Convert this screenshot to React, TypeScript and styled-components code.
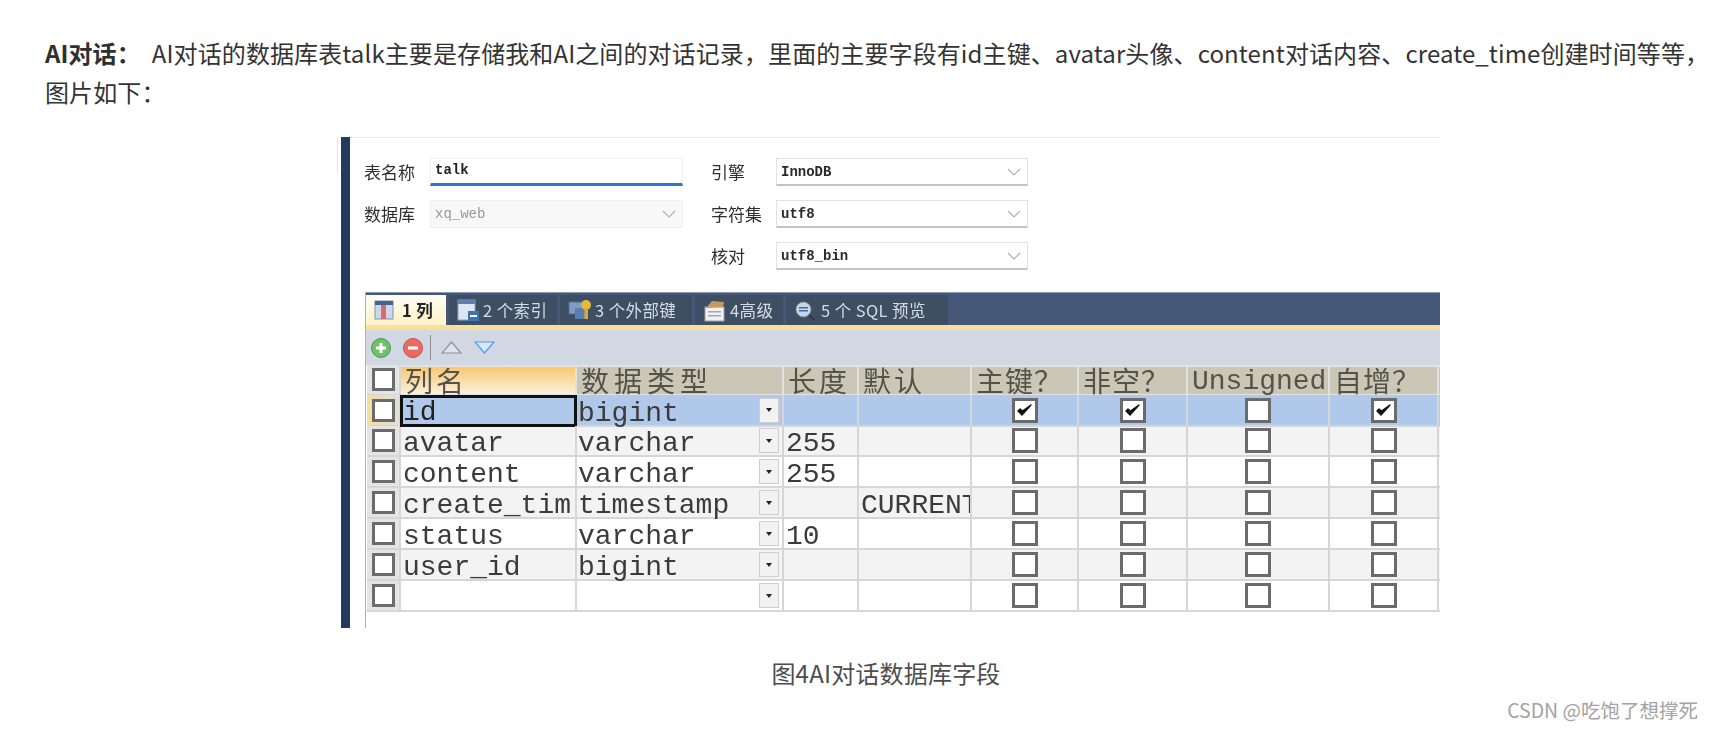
import React from "react";
import styled, { createGlobalStyle } from "styled-components";

const Global = createGlobalStyle`
  html, body { margin: 0; padding: 0; background: #fff; }
  body { font-family: "Noto Sans CJK SC", "Noto Sans", sans-serif; }
  #root { width: 1713px; height: 729px; overflow: hidden; position: relative; }
`;

const CJK = `"Noto Sans CJK SC", sans-serif`;
const MONO = `"Liberation Mono", "Noto Sans CJK SC", monospace`;

const Page = styled.main`
  display: flex;
  flex-direction: column;
  padding-top: 33px;
  color: #4d4d4d;
`;
const Paragraph = styled.p`
  margin: 0;
  padding: 0 0 0 45px;
  font-size: 24px;
  letter-spacing: 0.1px;
  line-height: 39px;
  color: #333;
`;
const Strong = styled.strong`
  font-weight: 700;
  color: #2f2f2f;
`;
const Figure = styled.figure`
  margin: 26px 0 0 330px;
  display: flex;
  width: 1110px;
  height: 491px;
  overflow: hidden;
  filter: blur(0.45px);
`;
const Sliver = styled.div`
  width: 11px;
  flex: none;
  display: flex;
  flex-direction: column;
`;
const SliverEdge = styled.div`
  width: 8px;
  height: 35px;
  border-right: 1px solid #e4e4e4;
  box-sizing: border-box;
`;
const Stripe = styled.div`
  width: 9px;
  flex: none;
  background: #243a5e;
`;
const Shot = styled.div`
  flex: 1;
  min-width: 0;
  display: flex;
  flex-direction: column;
  border-top: 1px solid #f6ecd3;
  background: #fff;
`;
const Form = styled.div`
  display: grid;
  grid-template-columns: 66px 253px 28px 65px 252px;
  grid-auto-rows: 28px;
  row-gap: 14px;
  padding: 20px 0 22px 14px;
  align-items: center;
`;
const Label = styled.span<{ $col: number }>`
  grid-column: ${(p) => p.$col};
  font-size: 17px;
  line-height: 24px;
  font-family: ${CJK};
  color: #2e2e2e;
  white-space: nowrap;
`;
const TextField = styled.div`
  grid-column: 2;
  height: 28px;
  box-sizing: border-box;
  background: #fff;
  border: 1px solid #f0f0f0;
  border-bottom: 3px solid #2b79cf;
  padding-left: 4px;
  font: 700 14px/22px ${MONO};
  color: #222;
`;
const Select = styled.div<{ $col: number; $disabled?: boolean }>`
  grid-column: ${(p) => p.$col};
  height: 28px;
  box-sizing: border-box;
  display: flex;
  align-items: center;
  justify-content: space-between;
  padding: 0 6px 0 4px;
  background: ${(p) => (p.$disabled ? "#f8f8f8" : "#fff")};
  border: 1px solid ${(p) => (p.$disabled ? "#f0f0f0" : "#e2e2e2")};
  border-bottom: ${(p) => (p.$disabled ? "1px solid #eee" : "2px solid #c4c4c4")};
  font: ${(p) => (p.$disabled ? 400 : 700)} 14px/20px ${MONO};
  color: ${(p) => (p.$disabled ? "#999" : "#2a2a2a")};
`;
const Chevron = () => (
  <svg width="14" height="8" viewBox="0 0 14 8">
    <polyline points="1,1 7,7 13,1" fill="none" stroke="#b0b0b0" strokeWidth="1.2" />
  </svg>
);

const Panel = styled.section`
  margin-left: 15px;
  flex: 1;
  display: flex;
  flex-direction: column;
  border-left: 1.5px solid #a5b2c8;
  min-height: 0;
`;
const TabBar = styled.div`
  height: 33px;
  flex: none;
  display: flex;
  align-items: stretch;
  gap: 3px;
  box-sizing: border-box;
  padding-top: 2px;
  background: #45587a;
  border-top: 1px solid #8d99ad;
`;
const Tab = styled.div<{ $active?: boolean; $w: number; $gap: number }>`
  width: ${(p) => p.$w}px;
  flex: none;
  box-sizing: border-box;
  display: flex;
  align-items: center;
  gap: ${(p) => p.$gap}px;
  padding-left: 8px;
  font-family: ${CJK};
  font-size: 16.5px;
  line-height: 24px;
  letter-spacing: 0.4px;
  font-weight: ${(p) => (p.$active ? 700 : 400)};
  white-space: nowrap;
  color: ${(p) => (p.$active ? "#222" : "#d6dce5")};
  background: ${(p) =>
    p.$active ? "linear-gradient(#fffdf4, #fff2c8)" : "#3e4f63"};
`;
const YellowRule = styled.div`
  height: 5px;
  flex: none;
  background: #fadf98;
`;
const Toolbar = styled.div`
  height: 35px;
  flex: none;
  background: #d1d8e3;
  display: flex;
  align-items: center;
  padding-left: 5px;
  gap: 12px;
`;
const RoundBtn = styled.span<{ $c: string; $b: string }>`
  width: 20px;
  height: 20px;
  border-radius: 50%;
  background: ${(p) => p.$c};
  border: 1px solid ${(p) => p.$b};
  box-sizing: border-box;
  display: flex;
  align-items: center;
  justify-content: center;
`;
const Sep = styled.span`
  width: 1px;
  height: 25px;
  background: #8f8f8f;
  margin: 0 -2px 0 -5px;
`;
const Row = styled.div<{ $h: number; $bg: string }>`
  display: grid;
  grid-template-columns: 34px 176px 207px 75px 113px 107px 109px 142px 109px 12px;
  height: ${(p) => p.$h}px;
  flex: none;
  background: ${(p) => p.$bg};
  margin-left: 1px;
`;
const HeadCell = styled.div<{ $active?: boolean; $mono?: boolean; $track?: number }>`
  box-sizing: border-box;
  margin: 2px 2px 2px 0;
  padding: ${(p) => (p.$mono ? "3px 0 0 4px" : "0 0 2px 4px")};
  display: flex;
  align-items: center;
  white-space: nowrap;
  font-family: ${(p) => (p.$mono ? MONO : CJK)};
  font-size: 28px;
  letter-spacing: ${(p) => p.$track ?? 0}px;
  line-height: 24px;
  color: #55524a;
  background: ${(p) =>
    p.$active ? "linear-gradient(#f8c872, #fbf0dc)" : "#cac7b7"};
`;
const Cell = styled.div<{ $selected?: boolean; $clip?: boolean }>`
  box-sizing: border-box;
  position: relative;
  min-width: 0;
  border-right: 2px solid #d6d6d6;
  border-bottom: 2px solid #d6d6d6;
  padding: 6px 0 0 2px;
  display: flex;
  align-items: center;
  overflow: ${(p) => (p.$clip ? "hidden" : "visible")};
  white-space: nowrap;
  font: 400 28px/23px ${MONO};
  color: #3b3b3b;
  ${(p) =>
    p.$selected
      ? "border: 3px solid #111; padding: 3px 0 0 0; margin-left: -1px; color: #222;"
      : ""}
`;
const CenterCell = styled(Cell)`
  justify-content: center;
  padding: 0;
`;
const TypeCell = styled(Cell)`
  padding: 0 3px 0 1px;
`;
const TypeText = styled.span`
  flex: 1;
  padding-top: 6px;
`;
const RowHead = styled.div<{ $tint?: boolean }>`
  box-sizing: border-box;
  border-right: 2px solid #d6d6d6;
  border-bottom: 2px solid #d6d6d6;
  display: flex;
  align-items: center;
  justify-content: center;
  background: ${(p) => (p.$tint ? "linear-gradient(90deg,#f6dca0,#dfe0da)" : "#e4e4e4")};
`;
const Box = styled.span<{ $small?: boolean }>`
  width: ${(p) => (p.$small ? 23 : 26)}px;
  height: ${(p) => (p.$small ? 23 : 25)}px;
  box-sizing: border-box;
  flex: none;
  border: 3px solid #6b6b6b;
  border-bottom-width: 3.5px;
  background: #fff;
  display: flex;
  align-items: center;
  justify-content: center;
`;
const DropBtn = styled.span`
  width: 20px;
  height: 25px;
  box-sizing: border-box;
  flex: none;
  background: #f2f2f2;
  border: 1.5px solid #cfcfcf;
  display: flex;
  align-items: center;
  justify-content: center;
  &::after {
    content: "";
    border-left: 3px solid transparent;
    border-right: 3px solid transparent;
    border-top: 4px solid #222;
  }
`;
const Caption = styled.figcaption`
  margin-top: 26px;
  width: 1713px;
  padding-left: 59px;
  box-sizing: border-box;
  text-align: center;
  font-size: 24px;
  letter-spacing: 0.2px;
  line-height: 38px;
  color: #4d4d4d;
`;
const Watermark = styled.div`
  position: absolute;
  right: 15px;
  top: 695px;
  font-family: "Noto Sans CJK SC", sans-serif;
  font-size: 19.5px;
  line-height: 30px;
  color: #a3a3a3;
  white-space: nowrap;
`;

const Check = () => (
  <svg width="17" height="15" viewBox="0 0 17 15">
    <path d="M2 8 L6 12 L15 2 L6.5 8 L4 6 Z" fill="#111" stroke="#111" strokeWidth="1.4" strokeLinejoin="round" />
  </svg>
);

const GridIcon = () => (
  <svg width="20" height="20" viewBox="0 0 20 20">
    <rect x="1" y="1" width="18" height="18" fill="#cbd8ea" stroke="#7d92b3" />
    <rect x="1" y="1" width="18" height="4" fill="#46638f" />
    <rect x="7" y="5" width="5" height="14" fill="#d86a6a" />
  </svg>
);
const IndexIcon = () => (
  <svg width="23" height="23" viewBox="0 0 23 23">
    <rect x="1" y="1" width="17" height="20" fill="#dce6f2" stroke="#8ba5c7" />
    <rect x="1" y="1" width="17" height="4" fill="#5c7fae" />
    <rect x="11" y="12" width="11" height="10" fill="#3f74b8" />
    <rect x="13" y="16" width="7" height="2" fill="#fff" />
  </svg>
);
const KeyIcon = () => (
  <svg width="24" height="22" viewBox="0 0 24 22">
    <rect x="1" y="3" width="13" height="12" fill="#7f9cc4" stroke="#4f6d99" />
    <rect x="7" y="9" width="10" height="11" fill="#5a7eb0" />
    <circle cx="18" cy="6" r="5" fill="#e5b93b" />
    <rect x="16.5" y="9" width="3.5" height="11" fill="#dca92a" />
  </svg>
);
const AdvIcon = () => (
  <svg width="23" height="23" viewBox="0 0 23 23">
    <rect x="2" y="8" width="19" height="14" fill="#f1f1ef" stroke="#9aa3ad" />
    <path d="M3 9 L9 2 L21 3 L20 8 Z" fill="#c9995c" />
    <rect x="5" y="12" width="13" height="1.5" fill="#9aa9ba" />
    <rect x="5" y="16" width="13" height="1.5" fill="#9aa9ba" />
  </svg>
);
const SqlIcon = () => (
  <svg width="21" height="21" viewBox="0 0 21 21">
    <circle cx="9.5" cy="9.5" r="7.5" fill="#c7d6e8" stroke="#7f8f9f" />
    <rect x="5" y="7" width="9" height="1.5" fill="#3f6da3" />
    <rect x="5" y="10" width="9" height="1.5" fill="#3f6da3" />
    <line x1="15" y1="15" x2="20" y2="20" stroke="#2e3a45" strokeWidth="2" />
  </svg>
);

type RowData = { name: string; type: string; len: string; def: string };
const rows: RowData[] = [
  { name: "avatar", type: "varchar", len: "255", def: "" },
  { name: "content", type: "varchar", len: "255", def: "" },
  { name: "create_tim", type: "timestamp", len: "", def: "CURRENT" },
  { name: "status", type: "varchar", len: "10", def: "" },
  { name: "user_id", type: "bigint", len: "", def: "" },
  { name: "", type: "", len: "", def: "" },
];
const heads = [
  { t: "列名", s: 3 },
  { t: "数据类型", s: 5 },
  { t: "长度", s: 3 },
  { t: "默认", s: 3 },
  { t: "主键？", s: 1 },
  { t: "非空？", s: 1 },
  { t: "Unsigned", s: 0 },
  { t: "自增？", s: 1 },
];

export default function App() {
  return (
    <Page>
      <Global />
      <Paragraph>
        <Strong>AI对话：</Strong>
        &nbsp;&nbsp;AI对话的数据库表talk主要是存储我和AI之间的对话记录，里面的主要字段有id主键、avatar头像、content对话内容、create_time创建时间等等，图片如下：
      </Paragraph>
      <Figure>
        <Sliver>
          <SliverEdge />
        </Sliver>
        <Stripe />
        <Shot>
          <Form>
            <Label $col={1}>表名称</Label>
            <TextField>talk</TextField>
            <Label $col={4}>引擎</Label>
            <Select $col={5}>InnoDB<Chevron /></Select>
            <Label $col={1}>数据库</Label>
            <Select $col={2} $disabled>xq_web<Chevron /></Select>
            <Label $col={4}>字符集</Label>
            <Select $col={5}>utf8<Chevron /></Select>
            <Label $col={4}>核对</Label>
            <Select $col={5}>utf8_bin<Chevron /></Select>
          </Form>
          <Panel>
            <TabBar>
              <Tab $active $w={80} $gap={8}><GridIcon />1 列</Tab>
              <Tab $w={108} $gap={3}><IndexIcon />2 个索引</Tab>
              <Tab $w={132} $gap={3}><KeyIcon />3 个外部键</Tab>
              <Tab $w={88} $gap={4}><AdvIcon />4高级</Tab>
              <Tab $w={162} $gap={6}><SqlIcon />5 个 SQL 预览</Tab>
            </TabBar>
            <YellowRule />
            <Toolbar>
              <RoundBtn $c="#6fc06a" $b="#4f9a4d">
                <svg width="10" height="10" viewBox="0 0 10 10"><path d="M0 5H10M5 0V10" stroke="#fff" strokeWidth="3" /></svg>
              </RoundBtn>
              <RoundBtn $c="#ea6a62" $b="#c9504a">
                <svg width="10" height="4" viewBox="0 0 10 4"><path d="M0 2H10" stroke="#fff" strokeWidth="3" /></svg>
              </RoundBtn>
              <Sep />
              <svg width="21" height="13" viewBox="0 0 21 13"><path d="M10.5 1 L20 12 H1 Z" fill="#dfe3e8" stroke="#8e9298" strokeWidth="1.2" /></svg>
              <svg width="21" height="13" viewBox="0 0 21 13"><path d="M10.5 12 L20 1 H1 Z" fill="#d5e9fb" stroke="#4f9be0" strokeWidth="1.2" /></svg>
            </Toolbar>
            <Row $h={30} $bg="#e2e2e2">
              <RowHead><Box $small /></RowHead>
              {heads.map((h, i) => (
                <HeadCell key={h.t} $active={i === 0} $mono={h.t === "Unsigned"} $track={h.s}>{h.t}</HeadCell>
              ))}
              <HeadCell />
            </Row>
            <Row $h={31} $bg="#b0c9ea">
              <RowHead $tint><Box $small /></RowHead>
              <Cell $selected>id</Cell>
              <TypeCell><TypeText>bigint</TypeText><DropBtn /></TypeCell>
              <Cell />
              <Cell />
              <CenterCell><Box><Check /></Box></CenterCell>
              <CenterCell><Box><Check /></Box></CenterCell>
              <CenterCell><Box /></CenterCell>
              <CenterCell><Box><Check /></Box></CenterCell>
              <Cell />
            </Row>
            {rows.map((r, i) => (
              <Row key={i} $h={31} $bg={i % 2 === 0 ? "#f3f3f3" : "#fff"}>
                <RowHead><Box $small /></RowHead>
                <Cell>{r.name}</Cell>
                <TypeCell><TypeText>{r.type}</TypeText><DropBtn /></TypeCell>
                <Cell>{r.len}</Cell>
                <Cell $clip>{r.def}</Cell>
                {[0, 1, 2, 3].map((j) => (
                  <CenterCell key={j}><Box /></CenterCell>
                ))}
                <Cell />
              </Row>
            ))}
          </Panel>
        </Shot>
      </Figure>
      <Caption>图4AI对话数据库字段</Caption>
      <Watermark>CSDN @吃饱了想撑死</Watermark>
    </Page>
  );
}
